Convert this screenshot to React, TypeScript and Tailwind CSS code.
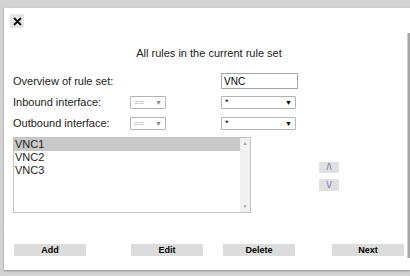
import React from 'react';

const font = "font-['Liberation_Sans',Arial,sans-serif]";

const Select = ({ value, disabled, width }: { value: string; disabled?: boolean; width: string }) => (
  <div
    className={`${width} h-[13px] bg-white border border-[#b4b4b4] rounded-[1px] flex items-center justify-between px-[3px] text-[9px] leading-none ${
      disabled ? 'text-[#a8a8a8]' : 'text-black'
    }`}
  >
    <span className="-mt-[1px]">{value}</span>
    <span className={`text-[7px] ${disabled ? 'text-[#8a8a8a]' : 'text-black'}`}>▼</span>
  </div>
);

const ActionButton = ({ label, className }: { label: string; className: string }) => (
  <div
    className={`${className} w-[72px] h-[12px] bg-[#dcdcdc] flex items-center justify-center text-[9px] font-bold leading-none text-black`}
  >
    {label}
  </div>
);

export default function App() {
  const rules = ['VNC1', 'VNC2', 'VNC3'];

  return (
    <div className={`${font} w-[410px] h-[276px] bg-[#d3d3d3] flex overflow-hidden`}>
      {/* page behind the dialog */}
      <div className="w-[4px] shrink-0 overflow-hidden">
        <div className="-ml-[6px] text-[11px] leading-[13px] text-[#6b7a99]">
          <div className="mt-[15px] text-[#b08050]">c</div>
          <div className="mt-[190px]">a</div>
          <div>r</div>
          <div className="mt-[5px]">v</div>
          <div>u</div>
        </div>
      </div>

      {/* dialog */}
      <div className="mt-[8px] h-[262px] flex-1 bg-white flex shadow-[0_1px_2px_rgba(0,0,0,0.35)]">
        <div className="w-[403px] flex flex-col">
          <div className="mt-[6px] ml-[6px] w-[14px] h-[14px] bg-[#e6e6e6] flex items-center justify-center">
            <svg width="9" height="9" viewBox="0 0 9 9">
              <path d="M1 1L8 8M8 1L1 8" stroke="#111" strokeWidth="1.8" />
            </svg>
          </div>

          <div className="mt-[18px] h-[14px] text-center text-[11px] leading-[14px] text-[#222] pl-[7px]">
            All rules in the current rule set
          </div>

          <div className="mt-[13px] h-[16px] flex items-center text-[11px] text-[#222]">
            <div className="ml-[9px] w-[208px]">Overview of rule set:</div>
            <div className="w-[77px] h-[16px] border border-[#a8a8a8] flex items-center px-[2px] text-[10px] text-black">
              VNC
            </div>
          </div>

          <div className="mt-[7px] h-[13px] flex items-center text-[11px] text-[#222]">
            <div className="ml-[9px] w-[117px]">Inbound interface:</div>
            <Select value="==" disabled width="w-[36px]" />
            <div className="w-[55px]" />
            <Select value="*" width="w-[75px]" />
          </div>

          <div className="mt-[8px] h-[13px] flex items-center text-[11px] text-[#222]">
            <div className="ml-[9px] w-[117px]">Outbound interface:</div>
            <Select value="==" disabled width="w-[36px]" />
            <div className="w-[55px]" />
            <Select value="*" width="w-[75px]" />
          </div>

          <div className="mt-[7px] flex">
            <div className="ml-[9px] w-[238px] h-[76px] border border-[#c4c4c4] flex">
              <div className="flex-1 text-[11px] leading-[13px] text-[#222]">
                {rules.map((r, i) => (
                  <div key={r} className={`pl-[1px] ${i === 0 ? 'bg-[#c8c8c8]' : ''}`}>
                    {r}
                  </div>
                ))}
              </div>
              <div className="w-[10px] bg-[#f1f1f1] flex flex-col justify-between items-center py-[3px] text-[5px] leading-none text-[#a0a0a0]">
                <span>▲</span>
                <span>▼</span>
              </div>
            </div>
            <div className="ml-[68px] flex flex-col">
              <div className="mt-[25px] w-[20px] h-[11px] bg-[#e0e0e0] flex items-center justify-center text-[9px] leading-none text-[#5a6aa0]">
                {'/\\'}
              </div>
              <div className="mt-[6px] w-[20px] h-[12px] bg-[#e0e0e0] flex items-center justify-center text-[9px] leading-none text-[#5a6aa0]">
                {'\\/'}
              </div>
            </div>
          </div>

          <div className="mt-[31px] flex">
            <ActionButton label="Add" className="ml-[10px]" />
            <ActionButton label="Edit" className="ml-[45px]" />
            <ActionButton label="Delete" className="ml-[20px]" />
            <ActionButton label="Next" className="ml-[37px]" />
          </div>
        </div>

        {/* frame scrollbar on the right */}
        <div className="mt-[25px] h-[225px] w-[3px] bg-[#a6a6a6] border-l border-[#cfcfcf]" />
      </div>
    </div>
  );
}
